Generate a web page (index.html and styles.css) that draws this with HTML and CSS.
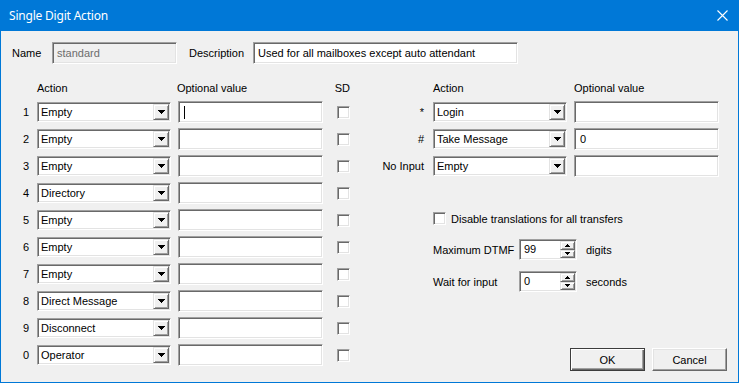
FILE: index.html
```html
<!DOCTYPE html>
<html lang="en">
<head>
    <meta charset="UTF-8">
    <title>Single Digit Action</title>
    <link rel="stylesheet" href="styles.css">
</head>
<body>
    <div class="window">
        <div class="titlebar">
            <span class="title">Single Digit Action</span>
            <svg class="close" width="11" height="11" viewBox="0 0 11 11">
                <path d="M0.5 0.5L10.5 10.5M10.5 0.5L0.5 10.5" stroke="#fff" stroke-width="1.1" fill="none"/>
            </svg>
        </div>

        <div class="content">
            <div class="top-row">
                <span class="name-lbl">Name</span>
                <div class="field field-name disabled">standard</div>
                <span class="desc-lbl">Description</span>
                <div class="field field-desc">Used for all mailboxes except auto attendant</div>
            </div>

            <div class="columns">
                <div class="digits">
                    <div class="head-row">
                        <span class="key"></span>
                        <span class="combo-head">Action</span>
                        <span class="value-head">Optional value</span>
                        <span class="sd-head">SD</span>
                    </div>

                    <div class="row">
                        <span class="key">1</span>
                        <div class="combo"><span class="combo-text">Empty</span><span class="combo-btn"><svg width="7" height="4"><path d="M0 0h7v1H0zM1 1h5v1H1zM2 2h3v1H2zM3 3h1v1H3z"/></svg></span></div>
                        <div class="field"><span class="caret"></span></div>
                        <span class="check"></span>
                    </div>
                    <div class="row">
                        <span class="key">2</span>
                        <div class="combo"><span class="combo-text">Empty</span><span class="combo-btn"><svg width="7" height="4"><path d="M0 0h7v1H0zM1 1h5v1H1zM2 2h3v1H2zM3 3h1v1H3z"/></svg></span></div>
                        <div class="field"></div>
                        <span class="check"></span>
                    </div>
                    <div class="row">
                        <span class="key">3</span>
                        <div class="combo"><span class="combo-text">Empty</span><span class="combo-btn"><svg width="7" height="4"><path d="M0 0h7v1H0zM1 1h5v1H1zM2 2h3v1H2zM3 3h1v1H3z"/></svg></span></div>
                        <div class="field"></div>
                        <span class="check"></span>
                    </div>
                    <div class="row">
                        <span class="key">4</span>
                        <div class="combo"><span class="combo-text">Directory</span><span class="combo-btn"><svg width="7" height="4"><path d="M0 0h7v1H0zM1 1h5v1H1zM2 2h3v1H2zM3 3h1v1H3z"/></svg></span></div>
                        <div class="field"></div>
                        <span class="check"></span>
                    </div>
                    <div class="row">
                        <span class="key">5</span>
                        <div class="combo"><span class="combo-text">Empty</span><span class="combo-btn"><svg width="7" height="4"><path d="M0 0h7v1H0zM1 1h5v1H1zM2 2h3v1H2zM3 3h1v1H3z"/></svg></span></div>
                        <div class="field"></div>
                        <span class="check"></span>
                    </div>
                    <div class="row">
                        <span class="key">6</span>
                        <div class="combo"><span class="combo-text">Empty</span><span class="combo-btn"><svg width="7" height="4"><path d="M0 0h7v1H0zM1 1h5v1H1zM2 2h3v1H2zM3 3h1v1H3z"/></svg></span></div>
                        <div class="field"></div>
                        <span class="check"></span>
                    </div>
                    <div class="row">
                        <span class="key">7</span>
                        <div class="combo"><span class="combo-text">Empty</span><span class="combo-btn"><svg width="7" height="4"><path d="M0 0h7v1H0zM1 1h5v1H1zM2 2h3v1H2zM3 3h1v1H3z"/></svg></span></div>
                        <div class="field"></div>
                        <span class="check"></span>
                    </div>
                    <div class="row">
                        <span class="key">8</span>
                        <div class="combo"><span class="combo-text">Direct Message</span><span class="combo-btn"><svg width="7" height="4"><path d="M0 0h7v1H0zM1 1h5v1H1zM2 2h3v1H2zM3 3h1v1H3z"/></svg></span></div>
                        <div class="field"></div>
                        <span class="check"></span>
                    </div>
                    <div class="row">
                        <span class="key">9</span>
                        <div class="combo"><span class="combo-text">Disconnect</span><span class="combo-btn"><svg width="7" height="4"><path d="M0 0h7v1H0zM1 1h5v1H1zM2 2h3v1H2zM3 3h1v1H3z"/></svg></span></div>
                        <div class="field"></div>
                        <span class="check"></span>
                    </div>
                    <div class="row">
                        <span class="key">0</span>
                        <div class="combo"><span class="combo-text">Operator</span><span class="combo-btn"><svg width="7" height="4"><path d="M0 0h7v1H0zM1 1h5v1H1zM2 2h3v1H2zM3 3h1v1H3z"/></svg></span></div>
                        <div class="field"></div>
                        <span class="check"></span>
                    </div>
                </div>

                <div class="specials">
                    <div class="head-row">
                        <span class="key"></span>
                        <span class="combo-head">Action</span>
                        <span class="value-head">Optional value</span>
                    </div>

                    <div class="row">
                        <span class="key">*</span>
                        <div class="combo"><span class="combo-text">Login</span><span class="combo-btn"><svg width="7" height="4"><path d="M0 0h7v1H0zM1 1h5v1H1zM2 2h3v1H2zM3 3h1v1H3z"/></svg></span></div>
                        <div class="field"></div>
                    </div>
                    <div class="row">
                        <span class="key">#</span>
                        <div class="combo"><span class="combo-text">Take Message</span><span class="combo-btn"><svg width="7" height="4"><path d="M0 0h7v1H0zM1 1h5v1H1zM2 2h3v1H2zM3 3h1v1H3z"/></svg></span></div>
                        <div class="field">0</div>
                    </div>
                    <div class="row">
                        <span class="key">No Input</span>
                        <div class="combo"><span class="combo-text">Empty</span><span class="combo-btn"><svg width="7" height="4"><path d="M0 0h7v1H0zM1 1h5v1H1zM2 2h3v1H2zM3 3h1v1H3z"/></svg></span></div>
                        <div class="field"></div>
                    </div>

                    <div class="option-row">
                        <span class="check"></span>
                        <span class="option-text">Disable translations for all transfers</span>
                    </div>

                    <div class="spin-row">
                        <span class="spin-label">Maximum DTMF</span>
                        <div class="spin">
                            <span class="spin-value">99</span>
                            <div class="spin-btns">
                                <span class="spin-btn"><svg width="5" height="3"><path d="M2 0h1v1H2zM1 1h3v1H1zM0 2h5v1H0z"/></svg></span>
                                <span class="spin-btn"><svg width="5" height="3"><path d="M0 0h5v1H0zM1 1h3v1H1zM2 2h1v1H2z"/></svg></span>
                            </div>
                        </div>
                        <span class="units">digits</span>
                    </div>
                    <div class="spin-row second">
                        <span class="spin-label">Wait for input</span>
                        <div class="spin">
                            <span class="spin-value">0</span>
                            <div class="spin-btns">
                                <span class="spin-btn"><svg width="5" height="3"><path d="M2 0h1v1H2zM1 1h3v1H1zM0 2h5v1H0z"/></svg></span>
                                <span class="spin-btn"><svg width="5" height="3"><path d="M0 0h5v1H0zM1 1h3v1H1zM2 2h1v1H2z"/></svg></span>
                            </div>
                        </div>
                        <span class="units">seconds</span>
                    </div>

                    <div class="buttons">
                        <button type="button" class="btn btn-default">OK</button>
                        <button type="button" class="btn">Cancel</button>
                    </div>
                </div>
            </div>
        </div>
    </div>
</body>
</html>
```

FILE: styles.css
```css
body {
    margin: 0;
    font-family: 'Liberation Sans', Arial, sans-serif;
    font-size: 11px;
    color: #000;
}
.window {
    width: 739px;
    height: 383px;
    box-sizing: border-box;
    border: 1px solid #0078d7;
    background-color: #f0f0f0;
}
.titlebar {
    height: 30px;
    background-color: #0078d7;
    color: #fff;
    display: flex;
    align-items: center;
    justify-content: space-between;
    padding: 0 10px 0 8px;
}
.title {
    font-family: 'Noto Sans', sans-serif;
    font-size: 12px;
    letter-spacing: -0.2px;
    padding-bottom: 2px;
}
.close {
    margin-bottom: 2px;
}
.content {
    padding-top: 11px;
}

/* name / description */
.top-row {
    display: flex;
    align-items: center;
    height: 22px;
    padding-left: 11px;
}
.name-lbl {
    width: 40px;
}
.desc-lbl {
    width: 64px;
    margin-left: 12px;
}
.field {
    box-sizing: border-box;
    height: 22px;
    display: flex;
    align-items: center;
    padding: 0 4px;
    background-color: #fff;
    border: 1px solid;
    border-color: #a0a0a0 #fff #fff #a0a0a0;
    box-shadow: inset 1px 1px #696969, inset -1px -1px #e3e3e3;
    flex: none;
}
.field-name {
    width: 125px;
}
.field-desc {
    width: 265px;
}
.disabled {
    background-color: #f0f0f0;
    color: #6d6d6d;
}

/* columns */
.columns {
    display: flex;
    margin-top: 18px;
}
.digits {
    width: 349px;
}
.specials {
    flex: 1;
}
.head-row {
    display: flex;
    height: 13px;
    line-height: 13px;
    margin-bottom: 6px;
}
.row {
    display: flex;
    align-items: center;
    height: 22px;
    margin-top: 5px;
}
.head-row + .row {
    margin-top: 0;
}
.key {
    width: 28px;
    text-align: right;
    flex: none;
}
.specials .key {
    width: 74px;
}
.combo-head {
    width: 134px;
    margin-left: 8px;
}
.value-head {
    width: 145px;
    margin-left: 7px;
}
.sd-head {
    margin-left: 14px;
}
.specials .combo-head,
.specials .combo {
    margin-left: 9px;
}

/* combo boxes */
.combo {
    box-sizing: border-box;
    width: 134px;
    height: 20px;
    margin-left: 8px;
    display: flex;
    align-items: center;
    background-color: #fff;
    border: 1px solid;
    border-color: #a0a0a0 #fff #fff #a0a0a0;
    box-shadow: inset 1px 1px #696969, inset -1px -1px #e3e3e3;
    flex: none;
}
.combo-text {
    flex: 1;
    padding-left: 3px;
    white-space: nowrap;
}
.combo-btn {
    box-sizing: border-box;
    width: 16px;
    height: 16px;
    margin-right: 1px;
    display: flex;
    align-items: center;
    justify-content: center;
    background-color: #f0f0f0;
    border: 1px solid;
    border-color: #e3e3e3 #696969 #696969 #e3e3e3;
    box-shadow: inset 1px 1px #fff, inset -1px -1px #a0a0a0;
}
.combo-btn svg,
.spin-btn svg {
    display: block;
    shape-rendering: crispEdges;
}
.row .field {
    width: 145px;
    margin-left: 7px;
    padding-left: 5px;
}
.caret {
    width: 1px;
    height: 13px;
    background-color: #000;
}
.check {
    box-sizing: border-box;
    width: 13px;
    height: 13px;
    margin-left: 14px;
    background-color: #fff;
    border: 1px solid;
    border-color: #a0a0a0 #fff #fff #a0a0a0;
    box-shadow: inset 1px 1px #696969, inset -1px -1px #e3e3e3;
    flex: none;
}

/* options on the right */
.option-row {
    display: flex;
    align-items: center;
    height: 13px;
    margin: 35px 0 0 83px;
}
.option-row .check {
    margin-left: 0;
}
.option-text {
    margin-left: 5px;
}
.spin-row {
    display: flex;
    align-items: center;
    height: 21px;
    margin: 14px 0 0 83px;
}
.spin-row.second {
    margin-top: 11px;
}
.spin-label {
    width: 86px;
}
.spin {
    box-sizing: border-box;
    width: 58px;
    height: 21px;
    display: flex;
    background-color: #fff;
    border: 1px solid;
    border-color: #a0a0a0 #fff #fff #a0a0a0;
    box-shadow: inset 1px 1px #696969, inset -1px -1px #e3e3e3;
}
.spin-value {
    flex: 1;
    padding-left: 4px;
    line-height: 19px;
}
.spin-btns {
    width: 15px;
    margin: 1px;
    display: flex;
    flex-direction: column;
}
.spin-btn {
    flex: 1;
    box-sizing: border-box;
    display: flex;
    align-items: center;
    justify-content: center;
    background-color: #f0f0f0;
    border: 1px solid;
    border-color: #e3e3e3 #696969 #696969 #e3e3e3;
    box-shadow: inset 1px 1px #fff, inset -1px -1px #a0a0a0;
}
.units {
    margin-left: 9px;
}

/* dialog buttons */
.buttons {
    display: flex;
    justify-content: flex-end;
    gap: 7px;
    margin-top: 56px;
    padding-right: 11px;
}
.btn {
    box-sizing: border-box;
    width: 75px;
    height: 23px;
    padding: 0;
    font-family: 'Liberation Sans', Arial, sans-serif;
    font-size: 11px;
    color: #000;
    background-color: #f0f0f0;
    border: 1px solid;
    border-color: #fff #696969 #696969 #fff;
    box-shadow: inset -1px -1px #a0a0a0, inset 1px 1px #e3e3e3;
}
.btn-default {
    border: 1px solid #3c3c3c;
    box-shadow: inset 1px 1px #fff, inset -1px -1px #696969, inset -2px -2px #a0a0a0;
}
```
